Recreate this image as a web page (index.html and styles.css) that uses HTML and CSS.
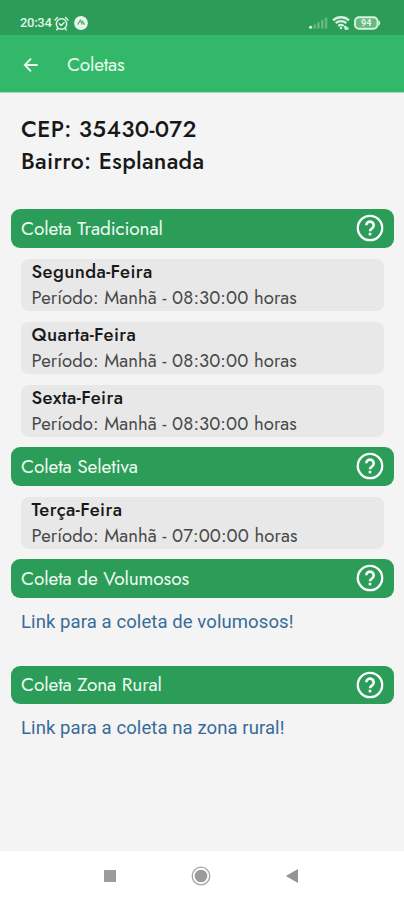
FILE: index.html
```
<!DOCTYPE html>
<html lang="pt-BR">
<head>
<meta charset="utf-8">
<meta name="viewport" content="width=device-width, initial-scale=1">
<title>Coletas</title>
<link rel="stylesheet" href="styles.css">
</head>
<body>
<svg class="defs" width="0" height="0" aria-hidden="true">
  <symbol id="help" viewBox="0 0 28 28">
    <circle cx="14" cy="14" r="12.2" fill="none" stroke="#fff" stroke-width="2.3"/>
    <path d="M10.300 11.300a3.700 3.700 0 1 1 6 2.900c-1.500 1.100-2.300 1.500-2.300 3" fill="none" stroke="#fff" stroke-width="2.600"/>
    <rect x="12.7" y="18.800" width="2.6" height="2.6" fill="#fff"/>
  </symbol>
</svg>
<div class="status">
  <span class="clock">20:34</span>
  <svg class="alarm" width="15" height="15" viewBox="0 0 15 15" fill="none" stroke="#e0f5e5" stroke-width="1.5" stroke-linecap="round"><circle cx="7.5" cy="8" r="5.2"/><path d="M1 4 3.5 1.5M14 4l-2.500-2.500M5.300 7.800l1.900 1.700 2.800-2.700M3.800 12.500l-1 1.300M11.200 12.500l1 1.300"/></svg>
  <svg class="badge" width="14" height="14" viewBox="0 0 14 14"><circle cx="7" cy="7" r="6.900" fill="#e8f7eb"/><path d="M3.700 8.500 6.300 4.200l2 4.300M8 4.600l2.500 4" fill="none" stroke="#5bb27b" stroke-width="1.400"/></svg>
  <svg class="signal" width="19" height="12" viewBox="0 0 19 12"><circle cx="1.600" cy="10.300" r="1.500" fill="#dff5e5"/><g fill="#65ba81"><rect x="4.500" y="7.500" width="2.500" height="4"/><rect x="8.200" y="5.200" width="2.500" height="6.300"/><rect x="12" y="2.800" width="2.500" height="8.700"/><rect x="15.800" y=".5" width="2.500" height="11"/></g></svg>
  <svg class="wifi" width="18" height="14" viewBox="0 0 18 14" fill="none" stroke="#d8f2df" stroke-width="2.300"><path d="M1 4.300C5.500.2 12.500.2 17 4.300M3.700 7.200c3-2.700 7.600-2.700 10.600 0M6.300 10c1.500-1.300 3.900-1.300 5.400 0"/><circle cx="9" cy="12" r="1.200" fill="#d8f2df" stroke="none"/><path d="M12.500 12.500h4M14 10l-1.500 2"/></svg>
  <svg class="battery" width="27" height="14" viewBox="0 0 27 14"><rect x="1" y="1.200" width="22.500" height="11.600" rx="4" fill="#65ba81" stroke="#d8f2df" stroke-width="1.900"/><path d="M24.300 4.300q2 .5 2 2.700t-2 2.700z" fill="#d8f2df"/><text x="12.200" y="10.200" text-anchor="middle">94</text></svg>
</div>
<header class="appbar">
  <svg width="16" height="16" viewBox="0 0 16 16" fill="none" stroke="#e9faee" stroke-width="1.900"><path d="M14.700 8H2M8 1.600 1.800 8 8 14.400"/></svg>
  <h1>Coletas</h1>
</header>
<main>
  <div class="address"><p class="cep">CEP: 35430-072</p><p>Bairro: Esplanada</p></div>
  <section>
    <h2>Coleta Tradicional<svg class="help"><use href="#help"/></svg></h2>
    <div class="item"><b>Segunda-Feira</b><span>Período: Manhã - 08:30:00 horas</span></div>
    <div class="item"><b>Quarta-Feira</b><span>Período: Manhã - 08:30:00 horas</span></div>
    <div class="item"><b>Sexta-Feira</b><span>Período: Manhã - 08:30:00 horas</span></div>
  </section>
  <section>
    <h2>Coleta Seletiva<svg class="help"><use href="#help"/></svg></h2>
    <div class="item"><b>Terça-Feira</b><span>Período: Manhã - 07:00:00 horas</span></div>
  </section>
  <section class="linked">
    <h2>Coleta de Volumosos<svg class="help"><use href="#help"/></svg></h2>
    <a>Link para a coleta de volumosos!</a>
  </section>
  <section class="linked">
    <h2>Coleta Zona Rural<svg class="help"><use href="#help"/></svg></h2>
    <a>Link para a coleta na zona rural!</a>
  </section>
</main>
<nav>
  <svg width="14" height="14"><rect x="1" y="1" width="12" height="12" fill="#9b9b9b"/></svg>
  <svg width="20" height="20"><circle cx="10" cy="10" r="8.800" fill="none" stroke="#a5a5a5" stroke-width="1.300"/><circle cx="10" cy="10" r="6.300" fill="#9b9b9b"/></svg>
  <svg width="14" height="16"><path d="M13 1v14L.8 8z" fill="#949494"/></svg>
</nav>
</body>
</html>
```
FILE: styles.css
```
* { box-sizing: border-box; }
body { margin: 0; height: 900px; display: flex; flex-direction: column; overflow: hidden; background: #f4f4f4; font-family: Jost, Lato, sans-serif; color: #181818; }
h1, h2, p { margin: 0; font-weight: 400; }
svg { display: block; flex: none; }
.defs { position: absolute; }
.status { height: 35px; flex: none; background: #2b9d59; display: flex; align-items: center; padding: 11px 23px 0 20px; color: #e0f5e5; }
.clock { font: 500 13px/14px Roboto, sans-serif; width: 34px; letter-spacing: -.3px; }
.badge { margin-left: 5px; }
.signal { margin-left: auto; }
.wifi { margin-left: 4px; }
.battery { margin-left: 4px; }
.battery text { font: 700 9px Roboto, sans-serif; fill: #e0f5e5; }
.appbar { height: 58px; flex: none; background: #33b86a; border-bottom: 1px solid #a5dcb8; display: flex; align-items: center; padding: 3px 23px 0; gap: 28px; color: #e9faee; }
.appbar h1 { font-size: 19px; line-height: 24px; letter-spacing: -.2px; }
main { flex: 1; padding: 20px 10px 0 11px; }
.address { height: 96px; padding-left: 10px; font-size: 23px; line-height: 32px; letter-spacing: .3px; }
.address p { font-weight: 500; white-space: nowrap; }
section { display: flex; flex-direction: column; gap: 11px; margin-bottom: 10.500px; }
h2 { height: 38.500px; background: #2b9d59; border-radius: 9px; display: flex; align-items: center; justify-content: space-between; padding: 0 10px; color: #eefbf1; font-size: 19px; letter-spacing: -.1px; }
.help { width: 28px; height: 28px; }
.item { height: 52px; margin: 0 10px; padding: 0 10.500px; border-radius: 8px; background: #e8e8e8; display: flex; flex-direction: column; font-size: 18.500px; line-height: 26px; white-space: nowrap; }
.item b { font-weight: 500; letter-spacing: .4px; }
.item span { color: #484848; letter-spacing: .07px; }
.linked { gap: 9px; height: 96px; }
.linked a { padding-left: 10px; font: 400 18.500px/30px Roboto, sans-serif; letter-spacing: .09px; color: #386b99; white-space: nowrap; }
nav { height: 49px; flex: none; background: #fff; display: flex; align-items: center; justify-content: space-between; padding: 0 105px 0 103px; }
```
